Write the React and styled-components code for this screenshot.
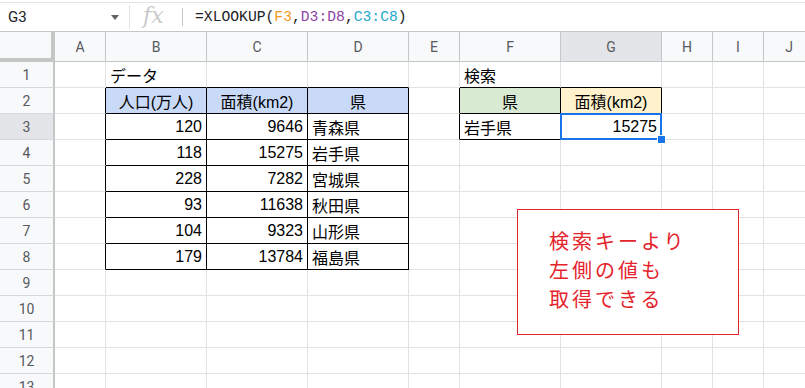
import React from "react";
import styled, { createGlobalStyle } from "styled-components";

const GlobalStyle = createGlobalStyle`
  html, body {
    margin: 0;
    padding: 0;
    background: #fff;
  }
  * {
    box-sizing: border-box;
  }
`;

const COLS = ["A", "B", "C", "D", "E", "F", "G", "H", "I", "J"];
const WIDTHS = [51, 101, 101, 101, 51, 101, 101, 51, 51, 51];
const ROWS = 13;

const BLUE = "#c9daf8";
const GREEN = "#d9ead3";
const YELLOW = "#fff2cc";

const cells = {
  "1,1": { t: "データ" },
  "2,1": { t: "人口(万人)", a: "center", bg: BLUE },
  "2,2": { t: "面積(km2)", a: "center", bg: BLUE },
  "2,3": { t: "県", a: "center", bg: BLUE },
  "1,5": { t: "検索" },
  "2,5": { t: "県", a: "center", bg: GREEN },
  "2,6": { t: "面積(km2)", a: "center", bg: YELLOW },
  "3,5": { t: "岩手県" },
  "3,6": { t: "15275", a: "right" },
};

const data = [
  [120, 9646, "青森県"],
  [118, 15275, "岩手県"],
  [228, 7282, "宮城県"],
  [93, 11638, "秋田県"],
  [104, 9323, "山形県"],
  [179, 13784, "福島県"],
];

data.forEach((row, i) => {
  cells[`${i + 3},1`] = { t: String(row[0]), a: "right" };
  cells[`${i + 3},2`] = { t: String(row[1]), a: "right" };
  cells[`${i + 3},3`] = { t: row[2] };
});

// ranges drawn with black borders
const boxed = [
  { r1: 2, r2: 8, c1: 1, c2: 3 },
  { r1: 2, r2: 3, c1: 5, c2: 6 },
];

const inBox = (r, c) =>
  boxed.some((b) => r >= b.r1 && r <= b.r2 && c >= b.c1 && c <= b.c2);

const SELECTED = { r: 3, c: 6 };

export default function App() {
  const gridCells = [];

  gridCells.push(<Corner key="corner" />);
  COLS.forEach((col, c) => {
    gridCells.push(
      <ColHeader key={`h${col}`} $active={c === SELECTED.c}>
        {col}
      </ColHeader>
    );
  });

  for (let r = 1; r <= ROWS; r++) {
    gridCells.push(
      <RowHeader key={`r${r}`} $active={r === SELECTED.r}>
        {r}
      </RowHeader>
    );
    COLS.forEach((col, c) => {
      const cell = cells[`${r},${c}`] || {};
      const rightDark = inBox(r, c) || inBox(r, c + 1);
      const bottomDark = inBox(r, c) || inBox(r + 1, c);
      const selected = r === SELECTED.r && c === SELECTED.c;
      gridCells.push(
        <Cell
          key={`${col}${r}`}
          $align={cell.a}
          $bg={cell.bg}
          $rb={rightDark ? "#000" : "#e2e2e2"}
          $bb={bottomDark ? "#000" : "#e2e2e2"}
        >
          {cell.t}
          {selected && (
            <Selection>
              <FillHandle />
            </Selection>
          )}
        </Cell>
      );
    });
  }

  return (
    <>
      <GlobalStyle />
      <Page>
        <FormulaBar>
          <NameBox>
            <span>G3</span>
            <Caret />
          </NameBox>
          <Divider />
          <FxIcon>fx</FxIcon>
          <Divider $h={18} $c="#c4c7c5" />
          <Formula>
            =XLOOKUP(<Ref $c="#f29b24">F3</Ref>,<Ref $c="#8e44a6">D3:D8</Ref>,
            <Ref $c="#1fa8cc">C3:C8</Ref>)
          </Formula>
        </FormulaBar>

        <Sheet>{gridCells}</Sheet>

        <Note>
          検索キーより
          <br />
          左側の値も
          <br />
          取得できる
        </Note>
      </Page>
    </>
  );
}

const Page = styled.div`
  position: relative;
  width: 805px;
  height: 388px;
  overflow: hidden;
  background: #fff;
  font-family: "Liberation Sans", "Noto Sans CJK JP", sans-serif;
`;

const FormulaBar = styled.div`
  display: flex;
  align-items: center;
  height: 30px;
  margin-top: 2px;
  border-top: 1px solid #e3e3e3;
  border-bottom: 1px solid #c4c7c5;
`;

const NameBox = styled.div`
  width: 129px;
  display: flex;
  align-items: center;
  justify-content: space-between;
  padding: 0 10px 0 8px;
  font-family: Roboto, "Liberation Sans", sans-serif;
  font-size: 15px;
  color: #202124;
`;

const Caret = styled.span`
  width: 0;
  height: 0;
  border-left: 4px solid transparent;
  border-right: 4px solid transparent;
  border-top: 5px solid #5f6368;
`;

const Divider = styled.div`
  width: 1px;
  height: ${(p) => p.$h || 24}px;
  background: ${(p) => p.$c || "#e3e3e3"};
`;

const FxIcon = styled.div`
  width: 52px;
  padding-left: 13px;
  font-family: "DejaVu Serif", "Liberation Serif", serif;
  font-style: italic;
  font-size: 22px;
  color: #c8cacc;
  line-height: 1;
  margin-top: -3px;
`;

const Formula = styled.div`
  padding-left: 12px;
  font-family: "Liberation Mono", "DejaVu Sans Mono", monospace;
  font-size: 14.7px;
  color: #202124;
  white-space: nowrap;
`;

const Ref = styled.span`
  color: ${(p) => p.$c};
`;

const Sheet = styled.div`
  display: grid;
  grid-template-columns: 55px ${WIDTHS.map((w) => `${w}px`).join(" ")};
  grid-template-rows: 30px repeat(${ROWS}, 26px);
`;

const Corner = styled.div`
  background: #f8f9fa;
  border-right: 4px solid #c4c7c5;
  border-bottom: 4px solid #c4c7c5;
`;

const HeaderBase = styled.div`
  display: flex;
  align-items: center;
  justify-content: center;
  background: ${(p) => (p.$active ? "#e3e5e8" : "#f8f9fa")};
  font-family: Roboto, "Liberation Sans", sans-serif;
  font-size: 14px;
  color: #575a5e;
  border-bottom: 1px solid #c4c7c5;
`;

const ColHeader = styled(HeaderBase)`
  border-right: 1px solid #c4c7c5;
`;

const RowHeader = styled(HeaderBase)`
  border-right: 2px solid #c4c7c5;
  border-bottom-color: #d6d8da;
`;

const Cell = styled.div`
  position: relative;
  display: flex;
  align-items: center;
  justify-content: ${(p) =>
    p.$align === "right"
      ? "flex-end"
      : p.$align === "center"
      ? "center"
      : "flex-start"};
  padding: 0 4px;
  background: ${(p) => p.$bg || "transparent"};
  border-right: 1px solid ${(p) => p.$rb};
  border-bottom: 1px solid ${(p) => p.$bb};
  font-size: 16px;
  color: #000;
  white-space: nowrap;
`;

const Selection = styled.div`
  position: absolute;
  z-index: 2;
  top: -1px;
  left: -1px;
  right: -1px;
  bottom: -1px;
  border: 2px solid #1a73e8;
  pointer-events: none;
`;

const FillHandle = styled.div`
  position: absolute;
  right: -6px;
  bottom: -6px;
  width: 9px;
  height: 9px;
  background: #1a73e8;
  border: 1px solid #fff;
`;

const Note = styled.div`
  position: absolute;
  left: 517px;
  top: 209px;
  width: 222px;
  height: 126px;
  padding: 16px 0 0 31px;
  border: 1px solid #e5232b;
  background: #fff;
  font-family: "Noto Sans CJK JP", sans-serif;
  font-size: 20px;
  line-height: 29px;
  letter-spacing: 3px;
  color: #e5232b;
`;
